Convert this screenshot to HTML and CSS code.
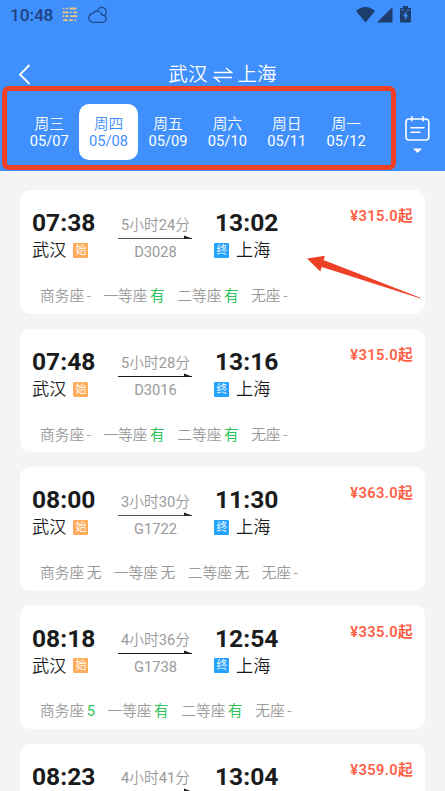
FILE: index.html
```html
<!DOCTYPE html>
<html lang="zh-CN">
<head>
<meta charset="utf-8">
<title>武汉 上海</title>
<link rel="stylesheet" href="styles.css">
</head>
<body>
<header class="header">
  <div class="status">
    <span class="clock">10:48</span>
    <svg class="dots" width="16" height="16" viewBox="0 0 16 16" fill="none" stroke="#f3c47e" stroke-width="1.8" stroke-linecap="round"><path d="M1.6 1.5h.1M4.9 1.5h.1M8.2 1.5h5.6M1.2 5.3h5M9 5.3h.1M12 5.3h2.4M1.2 9.1h.1M4 9.1h2M9 9.1h5.6M1.8 13.2h3M8 13.2h2M13.2 13.2h.1"/></svg>
    <svg class="cloud" width="20" height="18" viewBox="0 0 20 18" fill="none" stroke="#1e4888" stroke-width="1.2"><path d="M5.400 16.300C-.5 16.300-.6 8 5 7.300C7 4 13 4.500 14 9.200C19.500 8.600 19.800 16.300 14.300 16.300z"/><path d="M9.300 5A4.600 4.600 0 1 1 16.800 9.500"/></svg>
    <span class="spacer"></span>
    <svg width="19" height="16" viewBox="0 0 19 16" fill="#1d3e6d"><path d="M0 4Q9.500-4 19 4L9.500 15.500z"/></svg>
    <svg class="signal" width="16" height="16" viewBox="0 0 16 16" fill="#1d3e6d"><path d="M15.500 0v15.500H0z"/></svg>
    <svg class="battery" width="11" height="17" viewBox="0 0 11 17"><path d="M3 0h5v2h2q1 0 1 1v12.500q0 1-1 1H1q-1 0-1-1V3q0-1 1-1h2z" fill="#1d3e6d"/><path d="M1.500 4h2.500M7 4h2.500" stroke="#3f8ffd"/><path d="M6.300 5L3 10.200h2v4l3-5.200H6.300z" fill="#3f8ffd"/></svg>
  </div>
  <div class="title-row">
    <svg class="back" width="13" height="21" viewBox="0 0 13 21" fill="none" stroke="#fff" stroke-width="1.800"><path d="M11.500 1L2 10.500l9.500 9.500"/></svg>
    <h1 class="title">武汉<svg width="20" height="16" viewBox="0 0 20 16" fill="none" stroke="#fff" stroke-width="1.400"><path d="M1 5.500h17.500l-5.500-4.500M19 10.500H1.500l5.500 4.500"/></svg>上海</h1>
  </div>
  <div class="date-row">
    <nav class="dates">
      <div class="date">周三<span>05/07</span></div>
      <div class="date selected">周四<span>05/08</span></div>
      <div class="date">周五<span>05/09</span></div>
      <div class="date">周六<span>05/10</span></div>
      <div class="date">周日<span>05/11</span></div>
      <div class="date">周一<span>05/12</span></div>
    </nav>
    <div class="calendar">
      <svg width="25" height="38" viewBox="0 0 25 38" fill="none" stroke="#fff" stroke-width="1.600" stroke-linecap="round"><rect x="1" y="3" width="22.800" height="21" rx="3"/><path d="M6.800 .8v4M18 .8v4M6 11.800h13M6 16.200h9"/><path d="M8 32.500h9l-4.500 4.500z" fill="#fff" stroke="none"/></svg>
    </div>
  </div>
</header>
<main class="list">
  <article class="card">
    <div class="trip">
      <div class="stop"><b class="time">07:38</b><div class="city">武汉<i class="tag start">始</i></div></div>
      <div class="ride"><div><u>5</u>小时<u>24</u>分</div><svg class="line light" width="75" height="5" viewBox="0 0 75 5"><path d="M0 3.500h74"/><path class="head" d="M66 .6l8.500 3.200H66z"/></svg><span class="train">D3028</span></div>
      <div class="stop"><b class="time">13:02</b><div class="city"><i class="tag end">终</i>上海</div></div>
      <b class="price">¥315.0起</b>
    </div>
    <div class="seats"><span>商务座<em>-</em></span><span>一等座<em class="yes">有</em></span><span>二等座<em class="yes">有</em></span><span>无座<em>-</em></span></div>
  </article>
  <article class="card">
    <div class="trip">
      <div class="stop"><b class="time">07:48</b><div class="city">武汉<i class="tag start">始</i></div></div>
      <div class="ride"><div><u>5</u>小时<u>28</u>分</div><svg class="line" width="75" height="5" viewBox="0 0 75 5"><path d="M0 3.500h74"/><path class="head" d="M66 .6l8.500 3.200H66z"/></svg><span class="train">D3016</span></div>
      <div class="stop"><b class="time">13:16</b><div class="city"><i class="tag end">终</i>上海</div></div>
      <b class="price">¥315.0起</b>
    </div>
    <div class="seats"><span>商务座<em>-</em></span><span>一等座<em class="yes">有</em></span><span>二等座<em class="yes">有</em></span><span>无座<em>-</em></span></div>
  </article>
  <article class="card">
    <div class="trip">
      <div class="stop"><b class="time">08:00</b><div class="city">武汉<i class="tag start">始</i></div></div>
      <div class="ride"><div><u>3</u>小时<u>30</u>分</div><svg class="line light" width="75" height="5" viewBox="0 0 75 5"><path d="M0 3.500h74"/><path class="head" d="M66 .6l8.500 3.200H66z"/></svg><span class="train">G1722</span></div>
      <div class="stop"><b class="time">11:30</b><div class="city"><i class="tag end">终</i>上海</div></div>
      <b class="price">¥363.0起</b>
    </div>
    <div class="seats"><span>商务座<em>无</em></span><span>一等座<em>无</em></span><span>二等座<em>无</em></span><span>无座<em>-</em></span></div>
  </article>
  <article class="card">
    <div class="trip">
      <div class="stop"><b class="time">08:18</b><div class="city">武汉<i class="tag start">始</i></div></div>
      <div class="ride"><div><u>4</u>小时<u>36</u>分</div><svg class="line" width="75" height="5" viewBox="0 0 75 5"><path d="M0 3.500h74"/><path class="head" d="M66 .6l8.500 3.200H66z"/></svg><span class="train">G1738</span></div>
      <div class="stop"><b class="time">12:54</b><div class="city"><i class="tag end">终</i>上海</div></div>
      <b class="price">¥335.0起</b>
    </div>
    <div class="seats"><span>商务座<em class="yes">5</em></span><span>一等座<em class="yes">有</em></span><span>二等座<em class="yes">有</em></span><span>无座<em>-</em></span></div>
  </article>
  <article class="card last">
    <div class="trip">
      <div class="stop"><b class="time">08:23</b></div>
      <div class="ride"><div><u>4</u>小时<u>41</u>分</div><svg class="line" width="75" height="5" viewBox="0 0 75 5"><path d="M0 3.500h74"/><path class="head" d="M66 .6l8.500 3.200H66z"/></svg></div>
      <div class="stop"><b class="time">13:04</b></div>
      <b class="price">¥359.0起</b>
    </div>
  </article>
</main>
<div class="highlight"></div>
<svg class="pointer" width="116" height="45" viewBox="0 0 116 45"><path d="M0 3.500L18 .8L16.500 5L114 43L113.500 43.500L14.800 12L13.300 16.500z" fill="#ee4026"/></svg>
</body>
</html>
```
FILE: styles.css
```css
* { box-sizing: border-box; }
body {
  margin: 0;
  height: 791px;
  overflow: hidden;
  position: relative;
  background: #f4f4f4;
  color: #1a1b1c;
  font-family: Roboto, "Noto Sans CJK SC", sans-serif;
  font-size: 14.7px;
}
svg { display: block; flex: none; }
.header { height: 170.600px; background: #3f8ffd; color: #fff; }
.status { height: 30px; padding: 0 34px 0 10px; display: flex; align-items: center; }
.clock { width: 52px; color: #1e4380; font-size: 17.300px; font-weight: 500; line-height: 30px; letter-spacing: -.1px; }
.cloud { margin-left: 10px; }
.spacer { flex: 1; }
.signal { margin-left: 2px; }
.battery { margin-left: 7px; margin-top: -1px; }
.title-row { height: 30px; margin-top: 29px; display: flex; align-items: center; padding-left: 18px; }
.title { flex: 1; margin: 0 31px 0 0; display: flex; align-items: center; justify-content: center; gap: 5px; font-size: 19.600px; font-weight: 350; line-height: 30px; padding-top: 1px; }
.date-row { display: flex; margin-top: 15.300px; }
.dates { display: flex; padding-left: 19.500px; width: 393px; }
.date { width: 59.400px; height: 56px; padding-top: 11.500px; text-align: center; line-height: 17.500px; border-radius: 10px; font-weight: 350; }
.date:last-child { margin-right: 0; }
.date span { display: block; font-weight: 400; }
.selected { background: #fff; color: #3f8ffd; }
.calendar { padding: 12.200px 0 0 12px; }
.list { display: flex; flex-direction: column; gap: 14.700px; padding: 19.700px 20px 0; }
.card { height: 123.700px; flex: none; background: #fff; border-radius: 10px; padding: 19.200px 12px 0 12px; }
.last { height: 47px; border-radius: 10px 10px 0 0; overflow: hidden; }
.trip { display: grid; grid-template-columns: 86px 97px 1fr auto; height: 76.700px; align-items: start; }
.time { display: block; font-size: 24.600px; font-weight: 700; line-height: 28px; }
.city { display: flex; align-items: center; gap: 7px; font-size: 17.200px; font-weight: 350; line-height: 27.600px; }
.tag { width: 15px; height: 15px; margin-top: -1px; border-radius: 1px; color: #fff; font-size: 11px; font-weight: 350; font-style: normal; line-height: 15px; text-align: center; }
.start { background: #ffad5c; }
.end { background: #26a2ff; margin-left: -.6px; margin-right: -.3px; }
.ride { width: 75px; display: flex; flex-direction: column; align-items: center; color: #999; font-weight: 350; padding-top: 5.500px; line-height: 20px; }
.ride u { font-weight: 400; text-decoration: none; }
.line { stroke: #1a1b1c; stroke-width: 1; }
.light { stroke: #555; }
.head { fill: #1a1b1c; stroke: none; }
.train { margin-top: 2px; font-weight: 400; }
.price { color: #ff6146; font-size: 14.700px; font-weight: 600; letter-spacing: .35px; line-height: 20px; margin-top: -3px; }
.seats { display: flex; gap: 12.500px; padding-left: 8px; color: #999; font-weight: 350; line-height: 20px; }
.seats em { font-style: normal; margin-left: 2.600px; }
.seats em:not(.yes) { -webkit-text-stroke: .15px; }
.seats .yes { color: #30c45c; font-weight: 400; }
.highlight { position: absolute; left: 2px; top: 86px; width: 394px; height: 84px; border: 5px solid #ee4026; border-radius: 7px; }
.pointer { position: absolute; left: 306.500px; top: 254.500px; }
```
